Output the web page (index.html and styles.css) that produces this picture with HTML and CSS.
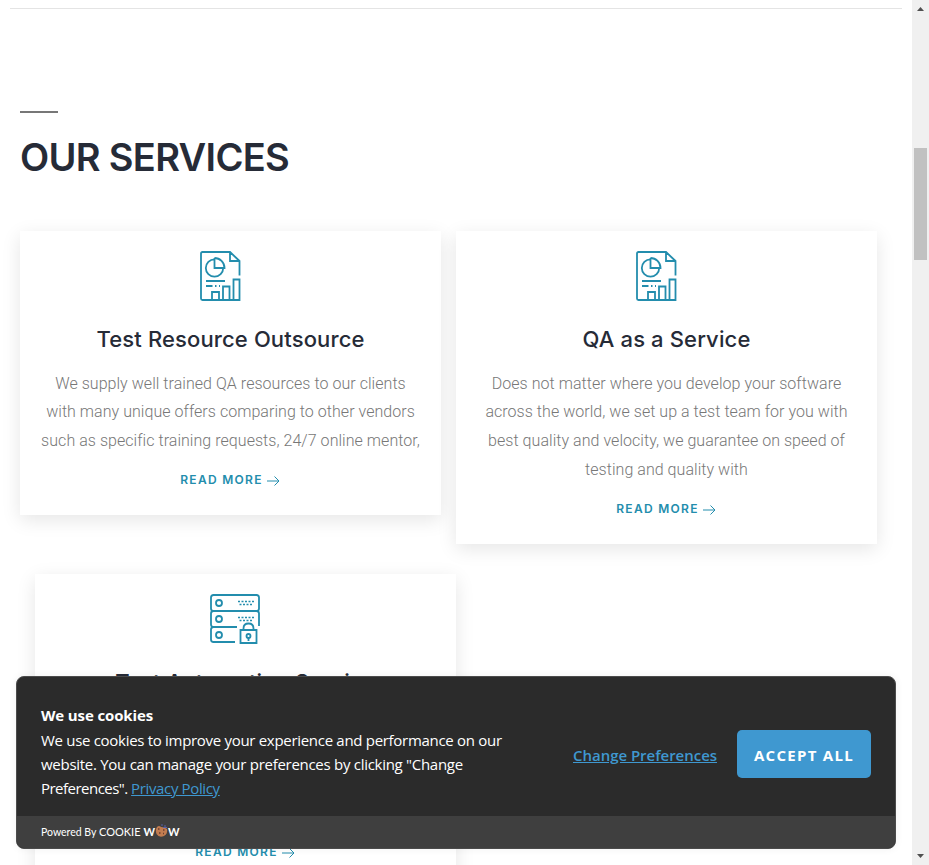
FILE: index.html
```html
<!DOCTYPE html>
<html lang="en">
<head>
<meta charset="utf-8">
<title>Our Services</title>
<link rel="stylesheet" href="styles.css">
</head>
<body>
<svg class="defs" width="0" height="0">
  <symbol id="report" viewBox="0 0 50 50">
    <path d="M44.5 24.500V10L35 1H7.500Q6 1 6 2.500V47.500Q6 49 7.500 49H44.500V28.500H38.500V49M35 1V10H44.500M28 49V35.500H34.500V49M17 49V41H24V49"/>
    <path d="M19.500 8.300A8.700 8.700 0 1 0 28.200 17M19.500 7V17H29.500A10 10 0 0 0 19.500 7M11 30H30M11 35H17.500M20 35H21.500M24 35H25"/>
  </symbol>
  <symbol id="server" viewBox="0 0 50 50">
    <path d="M27 33H3.500Q1 33 1 30.500V19.500Q1 17 3.500 17H46.500Q49 17 49 14.500V3.500Q49 1 46.500 1H3.500Q1 1 1 3.500V14.500Q1 17 3.500 17M46.500 17Q49 17 49 19.500V32M3.500 33Q1 33 1 35.500V45.500Q1 48 3.500 48H25"/>
    <circle cx="9" cy="9" r="3"/><circle cx="9" cy="25" r="3"/><circle cx="9" cy="41" r="3"/>
    <path class="dots" d="M28 7.500H44M29.500 10.500H43M28 23.500H44M29.500 26.500H43"/>
    <path d="M30.500 36H46.500V49H30.500ZM33.500 35.500V34.500Q33.500 29.500 38.500 29.500T43.500 34.500V35.500M38.500 44V47"/><circle cx="38.500" cy="42" r="2"/>
  </symbol>
  <symbol id="arrow" viewBox="0 0 14 12"><path d="M1 6H13M8.500 1.500L13 6L8.500 10.500"/></symbol>
</svg>
<div class="window">
  <main class="page">
    <hr class="divider">
    <header class="heading">
      <span class="dash"></span>
      <h1>OUR SERVICES</h1>
    </header>
    <section class="row">
      <article class="card">
        <svg class="icon"><use href="#report"/></svg>
        <h2>Test Resource Outsource</h2>
        <p>We supply well trained QA resources to our clients<br>with many unique offers comparing to other vendors<br>such as specific training requests, 24/7 online mentor,</p>
        <a class="more">READ MORE<svg class="arrow"><use href="#arrow"/></svg></a>
      </article>
      <article class="card">
        <svg class="icon"><use href="#report"/></svg>
        <h2>QA as a Service</h2>
        <p>Does not matter where you develop your software<br>across the world, we set up a test team for you with<br>best quality and velocity, we guarantee on speed of<br>testing and quality with</p>
        <a class="more">READ MORE<svg class="arrow"><use href="#arrow"/></svg></a>
      </article>
    </section>
    <section class="row second">
      <article class="card tall">
        <svg class="icon"><use href="#server"/></svg>
        <h2>Test Automation Service</h2>
        <a class="more">READ MORE<svg class="arrow"><use href="#arrow"/></svg></a>
      </article>
    </section>
  </main>
  <aside class="scrollbar">
    <i class="up"></i>
    <span class="thumb"></span>
    <i class="down"></i>
  </aside>
</div>
<div class="cookie">
  <div class="cookie-main">
    <div class="cookie-text">
      <b>We use cookies</b>
      <span class="l1">We use cookies to improve your experience and performance on our</span>
      <span class="l2">website. You can manage your preferences by clicking "Change</span>
      <span class="l3">Preferences". <a>Privacy Policy</a></span>
    </div>
    <a class="change">Change Preferences</a>
    <button class="accept">ACCEPT ALL</button>
  </div>
  <div class="powered"><span class="by">Powered By</span><span class="brand">COOKIE</span><b>W</b><svg class="biscuit" viewBox="0 0 13 14"><path d="M2 3Q4 1 6 3Q10 3 12 5Q13 10 9 12Q4 14 1.500 10Q0 6 2 3Z" fill="#c17c50"/><path d="M6 1H8M9 2H11M8 3.500H12" stroke="#5961a8" stroke-width="1.200"/><path d="M3 5H4.500M8 6H9.500M4 9H5.500M8 9.500H9" stroke="#673d32" stroke-width="1.500"/></svg><b>W</b></div>
</div>
</body>
</html>
```
FILE: styles.css
```css
* { box-sizing: border-box; }
body { margin: 0; height: 865px; overflow: hidden; position: relative; background: #fff; font-family: Roboto, sans-serif; }
.defs { position: absolute; }
.window { display: flex; height: 865px; overflow: hidden; }
.page { width: 912px; height: 865px; overflow: hidden; }
.divider { height: 1px; margin: 8px 10px 0 10px; border: 0; background: #e4e4e4; }
.heading { padding: 102px 20px 0; }
.dash { display: block; width: 38px; height: 2px; background: #777; }
h1 { margin: 20px 0 0; font: 600 38px/48px Inter, sans-serif; letter-spacing: -0.68px; color: #262b37; white-space: nowrap; }
.row { display: flex; align-items: flex-start; gap: 15px; margin: 50px 20px 0; }
.second { margin: 30px 35px 0; }
.card { width: 421px; padding: 20px 0 25px; display: flex; flex-direction: column; align-items: center; background: #fff; box-shadow: 0 5px 18px rgba(0, 0, 0, .1); text-align: center; }
.tall { height: 313px; }
.tall .more { margin-top: 146px; }
.icon { width: 50px; height: 50px; flex: none; margin-right: 21px; fill: none; stroke: #238dad; stroke-width: 1.8; }
.dots { stroke-dasharray: 2 1.5; stroke-width: 1.5; }
h2 { margin: 24px 0 0; font: 500 22px/28px Inter, sans-serif; letter-spacing: .13px; color: #262b37; white-space: nowrap; }
p { margin: 16.6px 0 0; font-size: 16px; line-height: 28.8px; font-weight: 300; letter-spacing: .045px; color: #777; white-space: nowrap; }
.more { display: flex; align-items: center; gap: 3px; padding-right: 1px; margin-top: 14.4px; height: 20px; font: 600 12px/20px Inter, sans-serif; letter-spacing: 1.3px; color: #238dad; }
.arrow { width: 14px; height: 12px; margin-top: 2px; fill: none; stroke: #238dad; stroke-width: 1; }
.scrollbar { width: 17px; height: 865px; display: flex; flex-direction: column; align-items: center; background: #f0f0f0; }
.up, .down { width: 7px; height: 4px; background: #505050; }
.up { margin-top: 7px; clip-path: polygon(50% 0, 100% 100%, 0 100%); }
.down { margin: auto 0 7px; clip-path: polygon(0 0, 100% 0, 50% 100%); }
.thumb { width: 13px; height: 112px; margin-top: 137px; background: #c1c1c1; }
.cookie { position: absolute; left: 16px; top: 676px; width: 880px; height: 173px; border: 1px solid #4b4b4b; border-radius: 8px; overflow: hidden; background: #2b2b2b; box-shadow: 0 0 8px rgba(0, 0, 0, .06); font-family: "Open Sans", "Noto Sans", sans-serif; color: #fff; }
.cookie-main { height: 139px; padding: 3px 24px 0; display: flex; align-items: flex-start; }
.cookie-text { width: 532px; margin-top: 23px; font-size: 15px; line-height: 24px; white-space: nowrap; }
.cookie-text > * { display: block; width: max-content; }
.cookie-text b { font-weight: 700; letter-spacing: -.13px; margin-bottom: 1px; }
.cookie-text span { letter-spacing: -.3px; }
.cookie-text .l2 { letter-spacing: -.28px; }
.cookie-text .l3 { letter-spacing: -.52px; }
.cookie-text .l3 a { letter-spacing: -.36px; }
.cookie-text a, .change { color: #3f98d0; text-decoration: underline; }
.change { width: 164px; margin-top: 63px; font-size: 15px; line-height: 24px; font-weight: 600; letter-spacing: -.03px; white-space: nowrap; }
.accept { width: 134px; height: 48px; margin: 50px 0 0; padding: 1px 0 0; border: 0; border-radius: 5px; background: #3f98d0; color: #fff; font: 700 15px/24px "Open Sans", sans-serif; letter-spacing: 1.3px; white-space: nowrap; }
.powered { height: 32px; padding-left: 24px; display: flex; align-items: center; background: #3f3f3f; font: 11px/16px Lato, sans-serif; }
.by { width: 58px; font-size: 10.5px; letter-spacing: 0; }
.brand { width: 44.5px; }
.biscuit { width: 13px; height: 14px; margin-top: -3px; fill: none; }
```
